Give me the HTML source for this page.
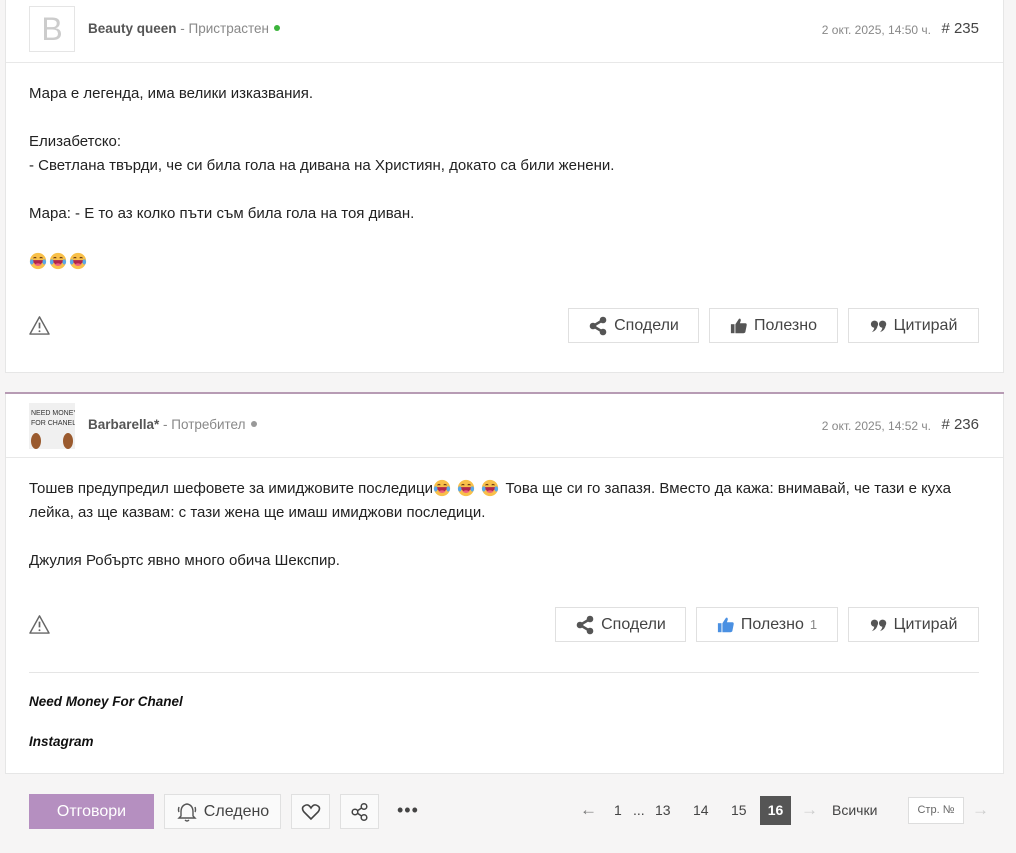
<!DOCTYPE html>
<html><head><meta charset="utf-8">
<style>
*{box-sizing:border-box;margin:0;padding:0}
body{width:1016px;height:853px;background:#f6f5f5;font-family:"Liberation Sans",sans-serif;color:#222;position:relative;overflow:hidden}
.card{position:absolute;left:5px;width:999px;background:#fff;border:1px solid #e6e6e6}
.hdr{position:absolute;left:0;right:0;height:64px;border-bottom:1px solid #e8e8e8}
.av{position:absolute;left:23px;top:7px;width:46px;height:46px;border:1px solid #e5e5e5;color:#ccc;font-size:32px;text-align:center;line-height:44px}
.name{position:absolute;left:82px;top:22px;font-size:13.5px;color:#555}
.name b{color:#555}
.name span{color:#888}
.dot{display:inline-block;width:6px;height:6px;border-radius:50%;margin-left:5px;vertical-align:2px}
.date{position:absolute;right:72px;top:24px;font-size:12px;color:#888}
.num{position:absolute;right:24px;top:21px;font-size:15px;color:#444}
.txt{position:absolute;left:23px;font-size:15px;line-height:24px;color:#222}
.btn{position:absolute;height:35px;border:1px solid #e0e0e0;background:#fff;font-size:16px;color:#444;display:flex;align-items:center;justify-content:center;gap:6px}
.warn{position:absolute;left:23px}
.emo{display:inline-block;width:18px;height:18px;vertical-align:-4px;margin-right:2px}
</style></head><body>
<svg width="0" height="0" style="position:absolute"><defs>
<symbol id="lol" viewBox="0 0 20 20"><circle cx="10" cy="10" r="9" fill="#f8c04a"/><path d="M3 9 Q10 20 17 9 Z" fill="#b0264a"/><path d="M6 14 Q10 17 14 14 Q10 11 6 14Z" fill="#ee5f7d"/><path d="M5 7 Q7 5 8 7M12 7 Q13 5 15 7" stroke="#6b3b17" fill="none" stroke-width="1.2"/><ellipse cx="3" cy="11" rx="2" ry="3" fill="#5aa8e8"/><ellipse cx="17" cy="11" rx="2" ry="3" fill="#5aa8e8"/></symbol>
<symbol id="warn" viewBox="0 0 22 22"><path d="M11 2 L21 20 H1 Z" fill="none" stroke="#666" stroke-width="1.5" stroke-linejoin="round"/><path d="M11 8v6" stroke="#666" stroke-width="1.8"/><circle cx="11" cy="17" r="1" fill="#666"/></symbol>
<symbol id="share" viewBox="0 0 20 20"><circle cx="15" cy="4" r="3.3"/><circle cx="15" cy="16" r="3.3"/><circle cx="5" cy="10" r="3.3"/><path d="M15 4 L5 10 L15 16" stroke="currentColor" stroke-width="2.5" fill="none"/></symbol>
<symbol id="thumb" viewBox="0 0 20 20"><rect x="1" y="8" width="4" height="10"/><path d="M6 8 L10 2 Q12 1 12 4 L11 7 H17 Q19 7 18.5 9.5 L17 17 Q16.5 18 15 18 H6 Z"/></symbol>
<symbol id="quote" viewBox="0 0 20 20"><circle cx="5" cy="8" r="4"/><path d="M8.5 9 Q8 15 2 17 Q5 14 5 10Z"/><circle cx="14" cy="8" r="4"/><path d="M17.5 9 Q17 15 11 17 Q14 14 14 10Z"/></symbol>
</defs></svg>

<div class="card" style="top:-2px;height:375px">
 <div class="hdr" style="top:0">
  <div class="av">B</div>
  <div class="name"><b>Beauty queen</b><span> - Пристрастен</span><span class="dot" style="background:#3cb43c"></span></div>
  <div class="date">2 окт. 2025, 14:50 ч.</div><div class="num"># 235</div>
 </div>
 <div class="txt" style="top:83px">Мара е легенда, има велики изказвания.<br><br>Елизабетско:<br>- Светлана твърди, че си била гола на дивана на Християн, докато са били женени.<br><br>Мара: - Е то аз колко пъти съм била гола на тоя диван.<br><br><svg class="emo"><use href="#lol"/></svg><svg class="emo"><use href="#lol"/></svg><svg class="emo"><use href="#lol"/></svg></div>
 <svg class="warn" style="top:316px" width="21" height="21"><use href="#warn"/></svg>
 <div class="btn" style="left:562px;top:309px;width:131px"><svg width="20" height="20" fill="#555" color="#555"><use href="#share"/></svg>Сподели</div>
 <div class="btn" style="left:703px;top:309px;width:129px"><svg width="18" height="18" fill="#555"><use href="#thumb"/></svg>Полезно</div>
 <div class="btn" style="left:842px;top:309px;width:131px"><svg width="18" height="18" fill="#555"><use href="#quote"/></svg>Цитирай</div>
</div>

<div style="position:absolute;left:5px;top:392px;width:999px;height:2px;background:#b79bb4"></div>

<div class="card" style="top:394px;height:380px;border-top:none">
 <div class="hdr" style="top:0">
  <div class="av" style="top:9px;border:none;background:#eee;overflow:hidden"><svg width="46" height="46"><rect width="46" height="46" fill="#f0f0f0"/><text x="2" y="12" font-size="7" fill="#333" font-family="Liberation Sans">NEED MONEY</text><text x="2" y="22" font-size="7" fill="#333" font-family="Liberation Sans">FOR CHANEL!</text><ellipse cx="7" cy="38" rx="5" ry="8" fill="#9a5a2e"/><ellipse cx="39" cy="38" rx="5" ry="8" fill="#9a5a2e"/></svg></div>
  <div class="name" style="top:23px"><b>Barbarella*</b><span> - Потребител</span><span class="dot" style="background:#999"></span></div>
  <div class="date" style="top:25px">2 окт. 2025, 14:52 ч.</div><div class="num" style="top:22px"># 236</div>
 </div>
 <div class="txt" style="top:83px">Тошев предупредил шефовете за имиджовите последици<svg class="emo"><use href="#lol"/></svg> <svg class="emo"><use href="#lol"/></svg> <svg class="emo"><use href="#lol"/></svg> Това ще си го запазя. Вместо да кажа: внимавай, че тази е куха<br>лейка, аз ще казвам: с тази жена ще имаш имиджови последици.<br><br>Джулия Робъртс явно много обича Шекспир.</div>
 <svg class="warn" style="top:220px" width="21" height="21"><use href="#warn"/></svg>
 <div class="btn" style="left:549px;top:213px;width:131px"><svg width="20" height="20" fill="#555" color="#555"><use href="#share"/></svg>Сподели</div>
 <div class="btn" style="left:690px;top:213px;width:142px"><svg width="18" height="18" fill="#4a90e2"><use href="#thumb"/></svg>Полезно <span style="font-size:13px;color:#888">1</span></div>
 <div class="btn" style="left:842px;top:213px;width:131px"><svg width="18" height="18" fill="#555"><use href="#quote"/></svg>Цитирай</div>
 <div style="position:absolute;left:23px;right:24px;top:278px;height:1px;background:#e5e5e5"></div>
 <div style="position:absolute;left:23px;top:300px;font-size:13.5px;font-weight:bold;font-style:italic;color:#111">Need Money For Chanel</div>
 <div style="position:absolute;left:23px;top:340px;font-size:13.5px;font-weight:bold;font-style:italic;color:#111">Instagram</div>
</div>

<div style="position:absolute;left:29px;top:794px;width:125px;height:35px;background:#b58fc0;color:#fff;font-size:16px;display:flex;align-items:center;justify-content:center">Отговори</div>
<div class="btn" style="left:164px;top:794px;width:117px;background:#fafafa"><svg width="22" height="22" viewBox="0 0 22 22" fill="none" stroke="#555" stroke-width="1.4"><path d="M11 3 Q5 4 5 11 V15 L3 17 H19 L17 15 V11 Q17 4 11 3Z M9 19 Q11 21 13 19"/><path d="M3 6 Q2 9 3 11 M19 6 Q20 9 19 11"/></svg>Следено</div>
<div class="btn" style="left:291px;top:794px;width:39px;background:#fafafa"><svg width="20" height="20" viewBox="0 0 20 20" fill="none" stroke="#444" stroke-width="1.6"><path d="M10 17 L3 10 Q0 6 3 4 Q7 1 10 6 Q13 1 17 4 Q20 6 17 10 Z"/></svg></div>
<div class="btn" style="left:340px;top:794px;width:39px;background:#fafafa"><svg width="20" height="20" viewBox="0 0 20 20" fill="none" stroke="#444" stroke-width="1.5"><circle cx="14" cy="4.5" r="2.8"/><circle cx="14" cy="15.5" r="2.8"/><circle cx="5" cy="10" r="2.8"/><path d="M7.5 8.7 L11.5 6 M7.5 11.3 L11.5 14"/></svg></div>
<div style="position:absolute;left:397px;top:800px;font-size:18px;color:#444;letter-spacing:1px">•••</div>

<div style="position:absolute;top:802px;left:0;font-size:14px;color:#444">
 <span style="position:absolute;left:580px;top:-2px;font-size:17px;color:#777">←</span>
 <span style="position:absolute;left:614px">1</span>
 <span style="position:absolute;left:633px">...</span>
 <span style="position:absolute;left:655px">13</span>
 <span style="position:absolute;left:693px">14</span>
 <span style="position:absolute;left:731px">15</span>
 <span style="position:absolute;left:760px;top:-6px;width:31px;height:29px;background:#555;color:#fff;font-weight:bold;text-align:center;line-height:29px">16</span>
 <span style="position:absolute;left:801px;top:-2px;font-size:17px;color:#ccc">→</span>
 <span style="position:absolute;left:832px">Всички</span>
 <span style="position:absolute;left:908px;top:-5px;width:56px;height:27px;border:1px solid #ddd;background:#fff;font-size:11px;color:#666;text-align:center;line-height:25px">Стр. №</span>
 <span style="position:absolute;left:972px;top:-2px;font-size:17px;color:#ccc">→</span>
</div>
</body></html>
